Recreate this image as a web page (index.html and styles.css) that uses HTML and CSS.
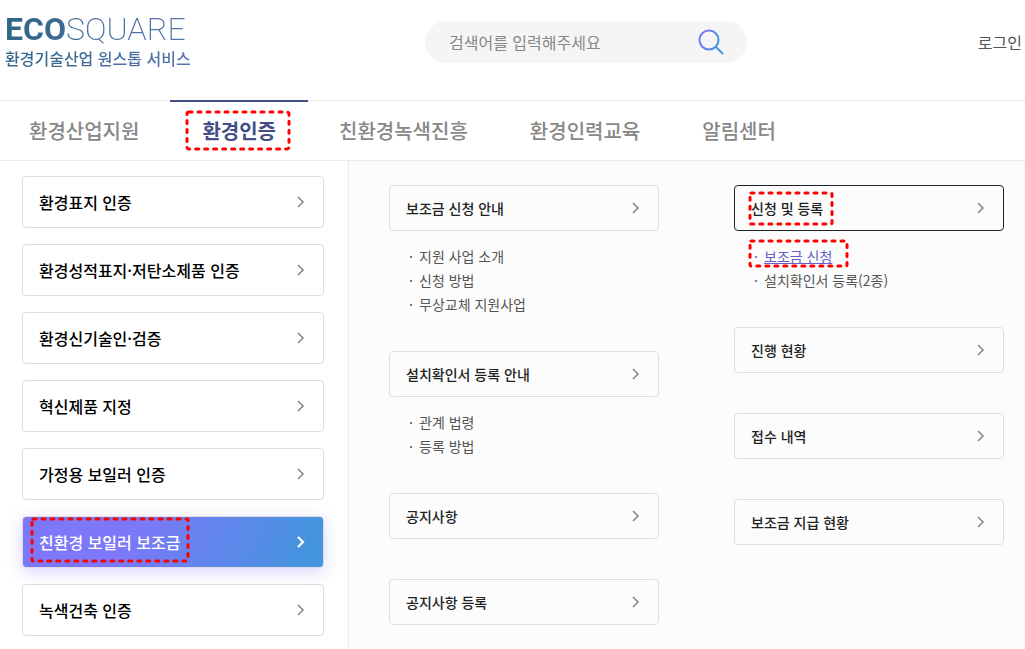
FILE: index.html
```html
<!DOCTYPE html>
<html lang="ko">

<head>
    <meta charset="UTF-8">
    <meta name="viewport" content="width=device-width, initial-scale=1.0">
    <title>ECOSQUARE 환경기술산업 원스톱 서비스</title>
    <link rel="stylesheet" href="styles.css">
</head>

<body>
    <!-- shared arrow icon -->
    <svg class="sprite" aria-hidden="true">
        <symbol id="arrow" viewBox="0 0 10 14">
            <path d="M2 2l5 5-5 5" fill="none" stroke="currentColor" />
        </symbol>
    </svg>

    <header class="header">
        <a class="logo" href="#">
            <span class="logo-name"><b>ECO</b>SQUARE</span>
            <span class="logo-sub">환경기술산업 원스톱 서비스</span>
        </a>
        <form class="search">
            <input type="text" placeholder="검색어를 입력해주세요" aria-label="검색어">
            <button type="button" aria-label="검색">
                <svg width="26" height="26" viewBox="0 0 26 26" fill="none" stroke="url(#search-color)" stroke-width="2">
                    <defs>
                        <linearGradient id="search-color" gradientUnits="userSpaceOnUse" x1="1" y1="8" x2="24" y2="14">
                            <stop offset="0.2" stop-color="#7b78f8" />
                            <stop offset="0.8" stop-color="#4493de" />
                        </linearGradient>
                    </defs>
                    <circle cx="11" cy="11" r="9.5" />
                    <path d="M17.8 17.8L25 25" />
                </svg>
            </button>
        </form>
        <a class="login" href="#">로그인</a>
    </header>

    <nav class="gnb">
        <a href="#">환경산업지원</a>
        <a href="#" class="active"><span class="marked">환경인증<svg class="mark mark-nav"><rect x="2" y="2" rx="2" /></svg></span></a>
        <a href="#">친환경녹색진흥</a>
        <a href="#">환경인력교육</a>
        <a href="#">알림센터</a>
    </nav>

    <main class="content">
        <nav class="side">
            <a class="box" href="#">환경표지 인증<svg class="arrow"><use href="#arrow" /></svg></a>
            <a class="box" href="#">환경성적표지·저탄소제품 인증<svg class="arrow"><use href="#arrow" /></svg></a>
            <a class="box" href="#">환경신기술인·검증<svg class="arrow"><use href="#arrow" /></svg></a>
            <a class="box" href="#">혁신제품 지정<svg class="arrow"><use href="#arrow" /></svg></a>
            <a class="box" href="#">가정용 보일러 인증<svg class="arrow"><use href="#arrow" /></svg></a>
            <a class="box active" href="#"><span class="marked">친환경 보일러 보조금<svg class="mark mark-side"><rect x="2" y="2" rx="1" /></svg></span><svg class="arrow"><use href="#arrow" /></svg></a>
            <a class="box" href="#">녹색건축 인증<svg class="arrow"><use href="#arrow" /></svg></a>
        </nav>

        <div class="menu">
            <div class="column">
                <section class="group open">
                    <a class="box" href="#">보조금 신청 안내<svg class="arrow"><use href="#arrow" /></svg></a>
                    <ul class="links">
                        <li><a href="#">지원 사업 소개</a></li>
                        <li><a href="#">신청 방법</a></li>
                        <li><a href="#">무상교체 지원사업</a></li>
                    </ul>
                </section>
                <section class="group open">
                    <a class="box" href="#">설치확인서 등록 안내<svg class="arrow"><use href="#arrow" /></svg></a>
                    <ul class="links">
                        <li><a href="#">관계 법령</a></li>
                        <li><a href="#">등록 방법</a></li>
                    </ul>
                </section>
                <section class="group">
                    <a class="box" href="#">공지사항<svg class="arrow"><use href="#arrow" /></svg></a>
                </section>
                <section class="group">
                    <a class="box" href="#">공지사항 등록<svg class="arrow"><use href="#arrow" /></svg></a>
                </section>
            </div>

            <div class="column">
                <section class="group open">
                    <a class="box current" href="#"><span class="marked">신청 및 등록<svg class="mark mark-menu"><rect x="2" y="2" rx="1" /></svg></span><svg class="arrow"><use href="#arrow" /></svg></a>
                    <ul class="links">
                        <li class="marked current"><a href="#">보조금 신청</a><svg class="mark mark-link"><rect x="2" y="2" rx="1" /></svg></li>
                        <li><a href="#">설치확인서 등록(2종)</a></li>
                    </ul>
                </section>
                <section class="group">
                    <a class="box" href="#">진행 현황<svg class="arrow"><use href="#arrow" /></svg></a>
                </section>
                <section class="group">
                    <a class="box" href="#">접수 내역<svg class="arrow"><use href="#arrow" /></svg></a>
                </section>
                <section class="group">
                    <a class="box" href="#">보조금 지급 현황<svg class="arrow"><use href="#arrow" /></svg></a>
                </section>
            </div>
        </div>
    </main>
</body>

</html>
```
FILE: styles.css
```css
* {
    box-sizing: border-box;
}

body {
    margin: 0;
    background-color: #fff;
    color: #000;
    font-family: "Noto Sans CJK KR", "Noto Sans", sans-serif;
    font-size: 16px;
}

a {
    color: inherit;
    text-decoration: none;
}

.sprite {
    display: none;
}

/* header */
.header {
    display: grid;
    grid-template-columns: 420px 322px 1fr;
    align-items: start;
    height: 100px;
    padding: 12px 3px 0 5px;
}

.logo {
    justify-self: start;
    display: flex;
    flex-direction: column;
    color: transparent;
    background: linear-gradient(90deg, #2f6686, #5674ac);
    -webkit-background-clip: text;
    background-clip: text;
}

.logo-name {
    font-family: Roboto, sans-serif;
    font-size: 32px;
    font-weight: 200;
    line-height: 34px;
}

.logo-name b {
    font-weight: 700;
}

.logo-sub {
    font-weight: 500;
    line-height: 24px;
}

.search {
    display: flex;
    align-items: center;
    height: 42px;
    margin-top: 9px;
    padding: 0 23px 0 24px;
    border-radius: 21px;
    background-color: #f5f5f5;
}

.search input {
    flex: 1;
    min-width: 0;
    padding: 0;
    border: 0;
    background: none;
    font: inherit;
}

.search input::placeholder {
    color: #888;
}

.search button {
    display: flex;
    padding: 0;
    border: 0;
    background: none;
    cursor: pointer;
}

.login {
    justify-self: end;
    margin-top: 9px;
    line-height: 42px;
    color: #555;
}

/* main navigation */
.gnb {
    display: flex;
    height: 61px;
    border-top: 1px solid #ebebeb;
    border-bottom: 1px solid #ebebeb;
    font-size: 20px;
    font-weight: 500;
    color: #888;
}

.gnb a {
    margin-top: -1px;
    padding: 0 31px;
    line-height: 58px;
    border-top: 2px solid transparent;
}

.gnb a:first-child {
    padding-left: 29px;
}

.gnb a.active {
    padding: 0 32px;
    border-color: #434f86;
    color: #434f86;
    font-weight: 700;
}

.content {
    display: grid;
    grid-template-columns: 349px 1fr;
    min-height: calc(100vh - 161px);
}

/* boxes used in the side menu and in the columns */
.box {
    display: flex;
    align-items: center;
    justify-content: space-between;
    border: 1px solid #ddd;
    border-radius: 4px;
    padding: 0 17px 0 16px;
    font-weight: 500;
}

.arrow {
    width: 10px;
    height: 14px;
    color: #888;
    stroke-width: 1.6;
}

.side {
    display: flex;
    flex-direction: column;
    gap: 16px;
    padding: 15px 24px 13px 22px;
    border-right: 1px solid #ebebeb;
}

.side .box {
    height: 52px;
}

.side .box.active {
    background: linear-gradient(110deg, #7d78f9 35%, #4395de 95%);
    box-shadow: 0 4px 16px rgba(125, 120, 249, 0.3);
    color: #fff;
}

.side .active .arrow {
    color: #fff;
    stroke-width: 2.2;
}

.menu {
    display: grid;
    grid-template-columns: 1fr 1fr;
    gap: 75px;
    padding: 24px 21px 0 40px;
    background-color: #fcfcfc;
}

.group {
    margin-bottom: 40px;
}

.group.open {
    margin-bottom: 35px;
}

.group:last-child {
    margin-bottom: 24px;
}

.menu .box {
    height: 46px;
    color: #222;
    font-size: 14px;
}

.menu .box.current {
    border-color: #222;
}

.links {
    margin: 13px 0 0;
    padding: 0 0 0 20px;
    list-style: none;
    color: #555;
    font-size: 14px;
    line-height: 24px;
}

.links li {
    display: flex;
}

.links li::before {
    content: "·";
    width: 10px;
}

.links .current {
    color: #5f60c8;
}

.links .current a {
    text-decoration: underline;
}

/* red dotted frames around the steps to follow */
.marked {
    position: relative;
}

.mark {
    position: absolute;
    pointer-events: none;
}

.mark rect {
    width: calc(100% - 4px);
    height: calc(100% - 4px);
    fill: none;
    stroke: #f00;
    stroke-width: 3;
    stroke-linecap: round;
    stroke-dasharray: 3 6;
}

.mark-nav {
    left: -17px;
    top: -6px;
    width: 106px;
    height: 41px;
}

.mark-side {
    left: -9px;
    top: -13px;
    width: 160px;
    height: 46px;
}

.mark-menu {
    left: -3px;
    top: -7px;
    width: 86px;
    height: 35px;
}

.mark-link {
    left: -6px;
    top: -5px;
    width: 101px;
    height: 29px;
}
```
